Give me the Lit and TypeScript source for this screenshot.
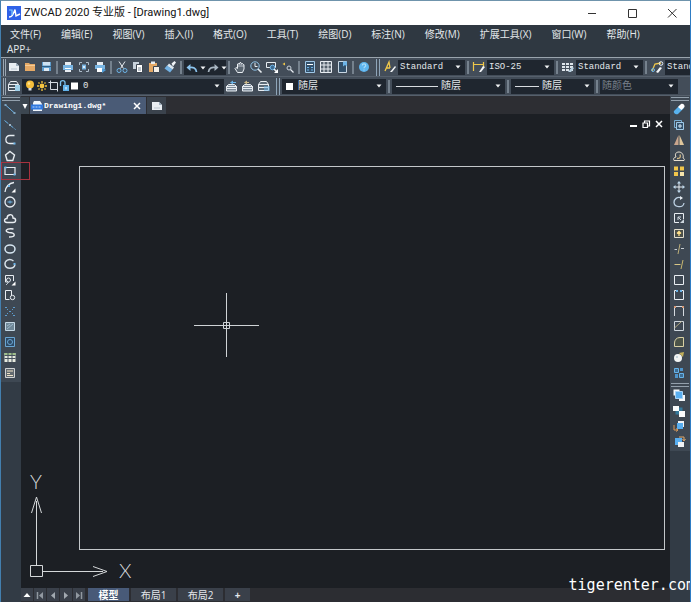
import { LitElement, html, svg, css, nothing, TemplateResult } from "lit";
import { customElement, property } from "lit/decorators.js";

const W = "#e8edf2";
const B = "#6cb4e8";
const Y = "#f0c84a";

const glyphs: Record<string, TemplateResult> = {
  new: svg`<path d="M2 3h7l3 3v5H2z" fill=${W}/><path d="M9 3v3h3" fill="#9fb0c0"/><path d="M4 9h6" stroke="#b9c4cf"/>`,
  open: svg`<path d="M2 3h4l1 1h5v7H2z" fill="#e5a966"/><path d="M2 5.500h10" stroke="#f6cb95"/>`,
  save: svg`<path d="M3 2h9v9H3z" fill="#5d9ccc"/><path d="M4 2h7v3.500H4z" fill="#cfe2f1"/><path d="M5 8h5v3H5z" fill="#dfeaf3"/><path d="M3 6.500h9" stroke="#2f5f87"/>`,
  print: svg`<path d="M4 2h6v3H4zM4 9h6v3H4z" fill=${W}/><path d="M2 5h10v5H2z" fill="#79b5e3"/><path d="M4 8.500h6" stroke="#fff"/>`,
  preview: svg`<path d="M2.500 5V2.500H5M9 2.500h2.500V5M11.500 9v2.500H9M5 11.500H2.500V9" fill="none" stroke="#aebdca"/><path d="M5 4.500h4v5H5z" fill="#79b5e3"/><circle cx="7" cy="7" r="1" fill="#fff"/>`,
  publish: svg`<path d="M4 2h6v3H4z" fill=${W}/><path d="M2 5h10v4H2z" fill="#79b5e3"/><path d="M4 8h6v4H4z" fill="#fff"/><path d="M9 8l4 2-4 3z" fill="#4e9bd6"/>`,
  cut: svg`<path d="M4 1.500l4.500 7M10 1.500L5.500 8.500" stroke=${W} fill="none"/><circle cx="4" cy="10.500" r="2" fill="none" stroke=${B}/><circle cx="10" cy="10.500" r="2" fill="none" stroke=${B}/>`,
  copy: svg`<path d="M2 2h6v7H2z" fill="#c8d2dc"/><path d="M5.500 4.500h6v8h-6z" fill="#fff" stroke="#3c4652"/><path d="M7 8h3M7 10h3" stroke="#7b8a99"/>`,
  paste: svg`<path d="M2 3h8v9H2z" fill="#e5a966"/><path d="M4 1.500h4v2.500H4z" fill=${W}/><path d="M6.500 6.500h6v6h-6z" fill="#f8f1e8" stroke="#3c4652"/>`,
  brush: svg`<path d="M8.500 3.500l3-2.500 1.500 1.500-3 4z" fill="#f0f4f8"/><path d="M6 3.500l5 4-1.500 2L4 6z" fill="#dbe7f1"/><path d="M4 5.500l5.500 4L7 12.500 1.500 8.500z" fill="#73b2e4"/>`,
  undo: svg`<path d="M11.500 11C11 7 8 6 5 6.500" fill="none" stroke="#8cc4ee" stroke-width="1.700"/><path d="M5.500 3v7L1.500 6.500z" fill="#8cc4ee"/>`,
  redo: svg`<path d="M2.500 11C3 7 6 6 9 6.500" fill="none" stroke="#a9b6c2" stroke-width="1.700"/><path d="M8.500 3v7l4-3.500z" fill="#a9b6c2"/>`,
  hand: svg`<path d="M4.500 12.500L2 8.500l1-1 1.500 1V4l1-.5.8.5.7-1.500 1 .2.500 1.200 1-.4.700 1 .800.200V9l-1.500 3.500z" fill="#5a6570" stroke=${W}/><path d="M6 4v3M8 4v3M10 5v2" stroke=${W} stroke-width=".7"/>`,
  zoomrt: svg`<circle cx="6" cy="6" r="4.200" fill="none" stroke="#8fc3e8"/><path d="M6 3v3.500h2.500" stroke=${W} fill="none"/><path d="M9 9l3.500 3.500" stroke=${W} stroke-width="1.600"/>`,
  zoomwin: svg`<path d="M1.500 2.500h9v5h-9z" fill="none" stroke=${W}/><circle cx="7.500" cy="7.500" r="2.300" fill="#3f6c92" stroke=${B}/><path d="M9 9l3 3" stroke=${W} stroke-width="1.500"/><path d="M13 9v4H9z" fill="#fff"/>`,
  zoomprev: svg`<path d="M1.500 4l2.500-1.500V5.500z" fill=${Y}/><circle cx="8" cy="8" r="2" fill="none" stroke="#c9d2da"/><path d="M9.500 9.500l3 3" stroke=${W} stroke-width="1.200"/>`,
  props: svg`<path d="M2.500 1.500h9v11h-9z" fill="#33506a" stroke="#9fc7e6"/><path d="M4 4.500h6" stroke="#fff"/><path d="M4 7.500h2M8 7.500h2M4 10h2M8 10h2" stroke=${B}/>`,
  grid: svg`<path d="M1.500 1.500h11v11h-11zM1.500 5h11M1.500 9h11M5 1.500v11M9 1.500v11" fill="#55616d" stroke=${W}/>`,
  palette: svg`<path d="M3.500 1.500h8v11h-8z" fill="#33506a" stroke="#c9d7e3"/><path d="M8 1.500h4v5l-2-1.500-2 1.500z" fill=${B}/>`,
  help: svg`<circle cx="7" cy="7" r="5" fill="#5db4ee"/><path d="M5.300 5.500c0-2.200 3.400-2.200 3.400 0 0 1.300-1.700 1.300-1.700 2.800M7 9.400v1.200" fill="none" stroke="#a9dbf8" stroke-width="1.200"/>`,
  textstyle: svg`<path d="M2 11L6 2l1 6M3.500 8H7" fill="none" stroke=${Y} stroke-width="1.300"/><path d="M7 12l5-6 1 1-4 5z" fill="#f4f6f8"/>`,
  dimstyle: svg`<path d="M1.500 2v9M11.500 2v5M2 4.500h9" fill="none" stroke=${Y} stroke-width="1.200"/><path d="M7 12l4-6 2 1-4 5z" fill="#f4f6f8"/>`,
  tablestyle: svg`<path d="M1 3h11v8H1z" fill="#dfe6ec"/><path d="M1 5.500h11M1 8.500h11M4.500 3v8M8.500 3v8" stroke="#47525e"/><path d="M7 12l4-5 2 1-3 4z" fill="#b8cfdf"/>`,
  leader: svg`<path d="M2 11l3-7 6-1" fill="none" stroke=${Y} stroke-width="1.300"/><circle cx="11" cy="3.500" r="1.800" fill="none" stroke=${W}/><path d="M6 12l4-5 2 1-4 5z" fill="#f4f6f8"/><circle cx="3" cy="10" r="1.500" fill="none" stroke=${B}/>`,
  layers: svg`<path d="M3.500 2.500h6l2 3h-10zM1.500 5.500h10v3h-10zM1.500 8.500h10v3h-10z" fill="#45525f" stroke=${W}/><path d="M8 6h5v6H8z" fill="#9fd0ea"/>`,
  bulb: svg`<circle cx="7" cy="5.500" r="4" fill="#f6bf3c"/><path d="M5.500 9h3v2.500h-3z" fill="#d8dde2"/><circle cx="6" cy="4.500" r="1.200" fill="#ffe595"/>`,
  sun: svg`<circle cx="7" cy="7" r="2.400" fill="#f6c540"/><path d="M7 2v2M7 10v2M2 7h2M10 7h2M3.500 3.500l1 1M9.500 9.500l1 1M10.500 3.500l-1 1M4.500 9.500l-1 1" stroke="#f6c540" stroke-width="1.300"/>`,
  frame: svg`<path d="M3.500 3.500h7v7h-7z" fill="none" stroke="#d5dbe1"/><path d="M1.500 3.500h3M3.500 1.500v3M10.500 9v3.500" stroke="#d5dbe1"/>`,
  lock: svg`<path d="M2.500 7V3.500c0-2.500 4.500-2.500 4.500 0V6" fill="none" stroke="#7cc1ee" stroke-width="1.300"/><path d="M5 6h6v6H5z" fill="#62b2ea"/><path d="M8 8v2.500" stroke="#fff"/>`,
  swatch: svg`<path d="M2 3.500h7v7H2z" fill="#fff"/>`,
  layer1: svg`<path d="M3.500 5.500h6l2 2h-10zM1.500 7.500h10v2h-10zM1.500 9.500h10v2.500h-10z" fill="#7e8d9b" stroke=${W}/><path d="M5 3.500l3-2v1.500h3v1H8V5.500z" fill=${B}/>`,
  layer2: svg`<path d="M3.500 5.500h6l2 2h-10zM1.500 7.500h10v2h-10zM1.500 9.500h10v2.500h-10z" fill="#7e8d9b" stroke=${W}/><path d="M3 3.500l3-2v1.500h2v1H6V5.500z" fill="#c9b88a"/>`,
  layer3: svg`<path d="M3.500 2.500h6l2 3h-10zM1.500 5.500h10v3h-10zM1.500 8.500h10v3h-10z" fill="#5c6a77" stroke=${W}/><path d="M7.500 7h1v5h-1zM9.500 7h1v5h-1zM11.500 7h1v5h-1z" fill=${B}/>`,
  line: svg`<path d="M2.500 3l9 8" stroke=${B}/><path d="M1.500 2h2v2h-2zM10.500 10h2v2h-2z" fill="#7fa6c4"/>`,
  xline: svg`<path d="M1.500 2.500l11 9" stroke=${B} stroke-dasharray="5 1.500"/><path d="M6 6h2v2H6z" fill="#9fb5c6"/>`,
  pline: svg`<path d="M11.500 2.500H7c-5.500 0-5.500 8 0 8h4.500" fill="none" stroke=${W} stroke-width="1.300"/><path d="M10.500 9.500h2v2h-2z" fill=${B}/>`,
  polygon: svg`<path d="M7 2.500l4.500 3.500-1.700 5.500H4.200L2.500 6z" fill="none" stroke=${W} stroke-width="1.400"/>`,
  rect: svg`<path d="M2 3.500h10v7H2z" fill="none" stroke=${W} stroke-width="1.200"/><path d="M1.500 2.500h2v2h-2zM10.500 9.500h2v2h-2z" fill=${B}/>`,
  arc: svg`<path d="M2 12C2.500 7 6 3 11 2.500" fill="none" stroke=${W} stroke-width="1.300"/><path d="M5 5h2v2H5z" fill=${B}/><path d="M12.500 8.500v4h-4z" fill="#fff"/>`,
  circle: svg`<circle cx="7" cy="7" r="5" fill="none" stroke=${W} stroke-width="1.300"/><path d="M4.500 7h5M7 5.500v3" stroke=${B}/>`,
  cloud: svg`<path d="M4 11.500c-3.500 0-3-4 0-4C4 3 10 2 10 7c3.500 0 3.500 4.500 0 4.500z" fill="none" stroke=${W} stroke-width="1.400"/>`,
  spline: svg`<path d="M10.500 3C2 2 1.500 6 6 6.500c7 .5 7 4.500 0 4.500" fill="none" stroke=${W} stroke-width="1.400"/>`,
  ellipse: svg`<ellipse cx="7" cy="7" rx="5" ry="4" fill="none" stroke="#d6e6f2" stroke-width="1.500"/>`,
  ellarc: svg`<path d="M10.500 4C6 .5 1.500 4 2 7.500c1 5 9 5 10 0" fill="none" stroke="#d6e0e8" stroke-width="1.400"/><path d="M10.500 6h2v2h-2z" fill=${B}/>`,
  insert: svg`<path d="M2.500 9V2.500h8V8M2.500 9H5" fill="none" stroke=${W}/><circle cx="5.500" cy="7" r="2" fill="none" stroke=${W}/><path d="M3 12l5-5" stroke="#b7c3ce"/><path d="M12.500 8.500v4h-4z" fill="#fff"/>`,
  block: svg`<path d="M8.500 8V2.500h-6v9h4" fill="none" stroke=${W}/><circle cx="9.500" cy="9.500" r="2.200" fill="none" stroke=${W}/>`,
  point: svg`<path d="M2 3h2v1H2zM10 3h2v1h-2zM6 7h2v1H6zM2 11h2v1H2zM10 11h2v1h-2zM4 5h1v1H4zM9 5h1v1H9zM4 9h1v1H4zM9 9h1v1H9z" fill="#5d9ccc"/>`,
  hatch: svg`<path d="M2.500 3.500h9v8h-9z" fill="#6f8797" stroke="#c5d8e5"/><path d="M4 10l6-5M4 7l3-2" stroke="#9db8ca"/>`,
  region: svg`<path d="M2.500 2.500h9v9h-9z" fill="#2d4a66" stroke="#6aa6d3"/><circle cx="7" cy="7" r="2.500" fill="none" stroke="#6aa6d3"/>`,
  table: svg`<path d="M1.500 3h11v9h-11z" fill="#e6eadf"/><path d="M1.500 3h11v2.500h-11z" fill="#9fc08a"/><path d="M1.500 5.500h11M1.500 8.500h11M5 3v9M9 3v9" stroke="#47525e"/>`,
  mtext: svg`<path d="M2.500 2.500h9v9h-9z" fill="#626a70" stroke="#d0d3d4"/><path d="M4 5h6M4 7.500h3M4 9.500h6" stroke="#eee3c8"/>`,
  erase: svg`<path d="M2 9l6-6 4 3-6 6c-2 1-5-1-4-3z" fill="#58b2ee"/><path d="M6 5l3-3c2-1 4 1 3.500 3L9.500 8z" fill="#fff"/>`,
  dup: svg`<path d="M2.500 2.500h7v2M2.500 2.500v7h2" fill="none" stroke="#79aed4"/><path d="M4.500 4.500h7v7h-7z" fill="#34536e" stroke="#9fcbea"/><path d="M6 8h4M8 6v4" stroke="#d7e9f6"/>`,
  mirror: svg`<path d="M6.500 2v10H2z" fill="#c9a58d"/><path d="M7.500 2v10H12z" fill="#e0c79c"/>`,
  offset: svg`<path d="M2 11.500h10c1-1 0-2-1-2.500 1-3-1-6-4-6S2.500 5 4 8c-2 0-3 2-2 3.500z" fill="none" stroke="#e6dfcf"/><path d="M5 9.500c3 0 4-1 3-4" fill="none" stroke="#d8bd84" stroke-width="1.300"/>`,
  array: svg`<path d="M2 2.500h4v4H2zM8 2.500h4v4H8zM2 8h4v4H2z" fill="#f1c64b"/><path d="M8 8h4v4H8z" fill="#f7e5ac"/>`,
  move: svg`<path d="M7 2v10M2 7h10" stroke=${W}/><path d="M7 1l2 2.500H5zM7 13l2-2.500H5zM1 7l2.500-2v4zM13 7l-2.500-2v4z" fill="#bcd6ea"/>`,
  rotate: svg`<path d="M9.500 3C5 1 2 4.500 2 7.500c.500 5 9 6 10 .500" fill="none" stroke="#bcd0e2" stroke-width="1.300"/><path d="M8 1l3 2-3 2z" fill=${W}/>`,
  scale: svg`<path d="M7 11.500H2.500v-9h9V8" fill="none" stroke=${W}/><path d="M6 6l3 3M6 9V6h3" stroke="#cdd6de" fill="none"/><path d="M12 8v4H8z" fill="#cdd6de"/>`,
  stretch: svg`<path d="M2.500 3.500h9v8h-9z" fill="#4b4f49" stroke="#e3dfcf"/><path d="M7 10V6M5 7.500l2-2 2 2" stroke="#ffe08a" stroke-width="1.300" fill="none"/>`,
  trim: svg`<path d="M6 12L8 2" stroke="#bcae79"/><path d="M2.500 7.500H5M9 6.500h3" stroke="#c7cdd2"/>`,
  extend: svg`<path d="M9 12l2-9" stroke="#c9b870"/><path d="M2.500 7.500h6" stroke="#d7c686"/>`,
  breakpt: svg`<path d="M2.500 2.500h9v9h-9z" fill="none" stroke=${W}/>`,
  breaks: svg`<path d="M5 2.500H2.500v9h9v-9H9" fill="none" stroke=${W}/><path d="M4 2h2v2H4zM8 2h2v2H8z" fill=${B}/>`,
  join: svg`<path d="M2.500 12V4M11.500 12V4M4 2.500h6" fill="none" stroke="#d3dae0"/><path d="M2 2h2v2H2zM10 2h2v2h-2z" fill="#d79b78"/>`,
  chamfer: svg`<path d="M2.500 2.500h9v9h-9z" fill="none" stroke="#cfd7de"/><path d="M2.500 9l7-6.500" stroke="#b3aa83"/>`,
  fillet: svg`<path d="M2.500 11.500V8c0-3 2-5.500 5.500-5.500h3.500v9z" fill="#4b5348" stroke="#d8d0a4"/>`,
  explode: svg`<circle cx="6" cy="8" r="4" fill="#f3f5f5"/><path d="M7 3l5-1-1 5z" fill="#c3b15b"/><circle cx="5" cy="7" r="1" fill="#b9cdd8"/>`,
  group: svg`<path d="M2.500 2.500h4v4h-4zM7.500 7.500h4v4h-4z" fill="#3d6d94" stroke="#67b4ea"/><path d="M8 2h3v3H8zM3 8h3v4H3z" fill="#4f95cb"/>`,
  front: svg`<path d="M1.500 1.500h6v6h-6zM7 7h6v6H7z" fill="#f4f7fa"/><path d="M3.500 3.500h7v7h-7z" fill="#58aef0" stroke="#a6d3f6"/>`,
  back: svg`<path d="M3.500 3.500h7v7h-7z" fill="#35799c"/><path d="M1 2h6v5H1zM7 7h6v6H7z" fill="#fafcfd"/>`,
  above: svg`<path d="M6 2h6v6H6z" fill="#f0f3f5"/><path d="M5 4h6v6H5z" fill="#58aef0"/><path d="M2 6v5h4M4 9.500L6 11l-2 1.500" fill="none" stroke="#d9995a"/>`,
  under: svg`<path d="M3 3h7v7H3z" fill="#58aef0"/><path d="M6 7h6v5H6z" fill="#f0f3f5"/><path d="M7 2h5v3M10.500 4L12 6l1.500-2" fill="none" stroke="#e0a768"/>`,
  logo: svg`<path d="M0 0h14v14H0z" fill="#2f62e8"/><path d="M2 11c3 0 4-2 6-7.500l1 6.500 4-2" fill="none" stroke="#fff" stroke-width="1.400"/><path d="M2 4h3v5" fill="none" stroke="#7fd0ff" stroke-width="1.200"/>`,
  dwg: svg`<path d="M4 2h6l2 3v7H3V4z" fill="#f1f6fb"/><path d="M1 5.500h12v5H1z" fill="#2f78e0"/><path d="M2.500 8h9" stroke="#bcd8fa" stroke-dasharray="2 1"/>`,
  down: svg`<path d="M4.500 5.500h5L7 8.500z" fill="#f2f4f6"/>`,
  downbig: svg`<path d="M4.500 5h5L7 10z" fill="#fff"/>`,
  close: svg`<path d="M4 4l6 6M10 4l-6 6" stroke="#fff" stroke-width="1.500"/>`,
  min: svg`<path d="M4 9h7" stroke="#fff" stroke-width="2"/>`,
  restore: svg`<path d="M5.500 6V4h5v5H8.500" fill="none" stroke="#fff" stroke-width="1.200"/><path d="M4 6h4.500v4.500H4z" fill="none" stroke="#fff" stroke-width="1.200"/>`,
  winmin: svg`<path d="M3 7.500h8" stroke="#333"/>`,
  winmax: svg`<path d="M3.500 3.500h8v8h-8z" fill="none" stroke="#333"/>`,
  winclose: svg`<path d="M3 3l8.500 8.500M11.500 3L3 11.500" stroke="#333"/>`,
  up: svg`<path d="M3.500 9h7L7 5z" fill="#fff"/>`,
  first: svg`<path d="M4.500 4v7" stroke="#9299a1" stroke-width="1.500"/><path d="M10 4v7L6 7.500z" fill="#9299a1"/>`,
  prev: svg`<path d="M9 4v7L5 7.500z" fill="#a2a9b0"/>`,
  next: svg`<path d="M5 4v7l4-3.500z" fill="#a2a9b0"/>`,
  last: svg`<path d="M9.500 4v7" stroke="#9299a1" stroke-width="1.500"/><path d="M4 4v7l4-3.500z" fill="#9299a1"/>`,
};

const icon = (name: string) =>
  html`<svg class="icon" width="14" height="14" viewBox="0 0 14 14" aria-hidden="true">${glyphs[name]}</svg>`;

const shared = css`
  * { box-sizing: border-box; }
  button {
    display: flex; align-items: center; justify-content: center;
    margin: 0; padding: 0; border: 0; background: none; color: inherit; font: inherit;
  }
  .icon { display: block; flex: none; }
`;

@customElement("tool-strip")
export class ToolStrip extends LitElement {
  @property({ attribute: false }) tools: string[] = [];
  @property() marked = "";
  static styles = [shared, css`
    :host { display: block; padding: 1px 1px 2px; background: #3e4853; }
    .grip { height: 4px; border-top: 1px solid #93a0ac; border-bottom: 1px solid #93a0ac; }
    .tools { display: flex; flex-direction: column; }
    button { height: 16px; width: 16px; }
    button:nth-child(2n) { height: 15px; }
    .marked { position: relative; }
    .marked::after {
      content: ""; position: absolute; z-index: 1; inset: -1px -12px -1px -1px; border: 1px solid #a8323f;
    }
  `];
  render() {
    return html`<div class="grip"></div>
      <div class="tools">${this.tools.map(
        (t) => html`<button class=${t === this.marked ? "marked" : ""} aria-label=${t}>${icon(t)}</button>`
      )}</div>`;
  }
}

@customElement("combo-box")
export class ComboBox extends LitElement {
  @property() value = "";
  @property() label = "";
  @property() sample = "";
  @property({ type: Boolean }) disabled = false;
  static styles = [shared, css`
    :host { display: flex; align-items: center; height: 15px; background: #1f262f; min-width: 0; color: #e3e7ea; }
    select {
      appearance: none; flex: 1; min-width: 0; height: 15px; margin: 0; padding: 0 0 0 2px; border: 0; background: none;
      color: inherit; font: 9px/15px "Liberation Mono", "Noto Sans CJK SC", monospace; opacity: 1;
    }
    select.cjk { font-size: 10px; }
    select:disabled { color: #78808a; }
    .box { width: 7px; height: 7px; margin: 0 3px 0 4px; background: #fff; }
    .rule { width: 24px; height: 1px; margin: 0 1px 0 4px; background: #d9dde1; }
    .long { width: 42px; }
  `];
  render() {
    const s = this.sample;
    return html`${s ? html`<span class=${s === "box" ? "box" : s === "long" ? "rule long" : "rule"}></span>` : nothing}
      <select class=${this.value.startsWith("随") ? "cjk" : ""} aria-label=${this.label} ?disabled=${this.disabled}><option>${this.value}</option></select>
      ${icon("down")}`;
  }
}

@customElement("app-root")
export class AppRoot extends LitElement {
  static styles = [shared, css`
    :host {
      display: flex; flex-direction: column; min-height: 100vh; overflow: hidden; position: relative;
      border-left: 1px solid #437fae; border-right: 1px solid #2e7cc4; border-top: 1px solid #6f94ac;
      background: #323b45; color: #e4e8eb; font: 10px/14px "Open Sans", "Noto Sans CJK SC", sans-serif;
    }
    header { display: flex; align-items: center; height: 24px; padding-left: 6px; gap: 3px; background: #fff; color: #111; }
    h1 { flex: 1; margin: 0; font: 11px/18px Roboto, "Noto Sans CJK SC", sans-serif; white-space: nowrap; }
    .win { width: 37px; height: 24px; }
    nav { display: flex; flex-wrap: wrap; padding-top: 2px; background: #2f3841; border-bottom: 1px solid #9aa4ad; }
    nav a { padding: 0 10px 0 9px; margin-right: 1px; height: 15px; line-height: 15px; color: inherit; text-decoration: none; white-space: nowrap; }
    nav a:last-child { padding-left: 6px; }
    .bar { display: flex; align-items: center; height: 19px; padding-left: 2px; background: #434d59; overflow: hidden; border-bottom: 1px solid #56606c; }
    .bar > * { flex: none; }
    .bar button { width: 16px; height: 16px; }
    .grip { width: 3px; height: 17px; border-left: 1px solid #9aa6b2; border-right: 1px solid #9aa6b2; }
    .sep { width: 2px; height: 13px; margin: 0 2px; background: #75818d; }
    .double { width: 4px; height: 17px; margin: 0 2px 0 4px; border-left: 1px solid #8fa5b9; border-right: 1px solid #8fa5b9; }
    .history { display: flex; height: 15px; background: #1f262f; }
    .history .arrow { width: 5px; }
    .style { width: 67px; }
    .layer { display: flex; align-items: center; height: 15px; width: 202px; padding-left: 2px; background: #1f262f; }
    .layer button { width: 12px; }
    .layer button:nth-of-type(n + 3) { width: 11px; }
    .layer combo-box { flex: 1; }
    .color { width: 104px; }
    .ltype { width: 113px; }
    .lweight { width: 83px; }
    .plot { width: 78px; }
    .main { flex: 1; display: flex; }
    .rail { width: 20px; flex: none; }
    .centre { flex: 1; display: flex; flex-direction: column; min-width: 0; }
    .tabs { display: flex; gap: 1px; height: 18px; padding-top: 1px; background: #2d2e33; }
    .tabs .list { width: 8px; background: #3c4650; }
    .file { display: flex; align-items: center; width: 116px; padding: 0 2px 0 0; background: #4a5b76; color: #fff; font: bold 8px/16px "Liberation Mono", monospace; }
    .file span { flex: 1; }
    .tabs .add { width: 19px; background: #3b434d; }
    .canvas { flex: 1; position: relative; background: #1c1f24; }
    .mdi { position: absolute; top: 3px; right: 5px; display: flex; }
    .mdi button { width: 13px; height: 14px; }
    .shape { position: absolute; inset: 52px 5px 38px 58px; border: 1px solid #c3c7ca; }
    .cursor { position: absolute; left: 173px; top: 179px; }
    .ucs { position: absolute; left: 8px; bottom: 1px; }
    .axis { fill: #d5d8da; font: 300 20px "Lato", sans-serif; }
    footer { display: flex; gap: 1px; height: 15px; padding-bottom: 2px; background: #2c2d32; }
    footer button { background: #3a404a; }
    .nav { width: 12px; }
    footer .sheet { width: 45px; margin-left: 1px; }
    footer .on { width: 41px; margin-left: 2px; background: #485a78; font-weight: bold; color: #fff; }
    footer .plus { width: 25px; margin-left: 1px; font-weight: bold; }
    .mark { position: absolute; right: -5px; bottom: 9px; color: #fff; font: 15px/18px "DejaVu Sans Mono", monospace; }
  `];

  private menus = ["文件(F)", "编辑(E)", "视图(V)", "插入(I)", "格式(O)", "工具(T)", "绘图(D)", "标注(N)", "修改(M)", "扩展工具(X)", "窗口(W)", "帮助(H)", "APP+"];
  private draw = ["line", "xline", "pline", "polygon", "rect", "arc", "circle", "cloud", "spline", "ellipse", "ellarc", "insert", "block", "point", "hatch", "region", "table", "mtext"];
  private modify = ["erase", "dup", "mirror", "offset", "array", "move", "rotate", "scale", "stretch", "trim", "extend", "breakpt", "breaks", "join", "chamfer", "fillet", "explode", "group"];
  private order = ["front", "back", "above", "under"];

  private tools(...names: string[]) {
    return names.map((n) => html`<button aria-label=${n}>${icon(n)}</button>`);
  }

  render() {
    const sep = html`<span class="sep"></span>`;
    return html`
      <header>
        ${icon("logo")}
        <h1>ZWCAD 2020 专业版 - [Drawing1.dwg]</h1>
        ${["winmin", "winmax", "winclose"].map((n) => html`<button class="win" aria-label=${n}>${icon(n)}</button>`)}
      </header>
      <nav>${this.menus.map((m) => html`<a href="#">${m}</a>`)}</nav>
      <div class="bar">
        <span class="grip"></span>
        ${this.tools("new", "open", "save")}${sep}
        ${this.tools("print", "preview", "publish")}${sep}
        ${this.tools("cut", "copy", "paste", "brush")}${sep}
        <div class="history">
          ${this.tools("undo")}<button class="arrow" aria-label="undo list">${icon("down")}</button>
          ${this.tools("redo")}<button class="arrow" aria-label="redo list">${icon("down")}</button>
        </div>${sep}
        ${this.tools("hand", "zoomrt", "zoomwin", "zoomprev")}${sep}
        ${this.tools("props", "grid", "palette")}${sep}
        ${this.tools("help")}
        <span class="double"></span>
        ${this.tools("textstyle")}<combo-box class="style" label="text style" value="Standard"></combo-box>${sep}
        ${this.tools("dimstyle")}<combo-box class="style" label="dimension style" value="ISO-25"></combo-box>${sep}
        ${this.tools("tablestyle")}<combo-box class="style" label="table style" value="Standard"></combo-box>${sep}
        ${this.tools("leader")}<combo-box class="style" label="leader style" value="Standard"></combo-box>
      </div>
      <div class="bar">
        <span class="grip"></span>
        ${this.tools("layers")}
        <div class="layer">
          ${this.tools("bulb", "sun", "frame", "lock", "swatch")}
          <combo-box label="layer" value="0"></combo-box>
        </div>
        ${this.tools("layer1", "layer2", "layer3")}
        <span class="double"></span>
        <combo-box class="color" label="color" sample="box" value="随层"></combo-box>${sep}
        <combo-box class="ltype" label="linetype" sample="long" value="随层"></combo-box>${sep}
        <combo-box class="lweight" label="lineweight" sample="short" value="随层"></combo-box>${sep}
        <combo-box class="plot" label="plot style" value="随颜色" disabled></combo-box>
      </div>
      <div class="main">
        <aside class="rail"><tool-strip .tools=${this.draw} marked="rect"></tool-strip></aside>
        <div class="centre">
          <div class="tabs">
            <button class="list" aria-label="drawings">${icon("downbig")}</button>
            <div class="file">${icon("dwg")}<span>Drawing1.dwg*</span><button aria-label="close drawing">${icon("close")}</button></div>
            <button class="add" aria-label="new drawing">${icon("new")}</button>
          </div>
          <div class="canvas">
            <div class="mdi">${this.tools("min", "restore", "close")}</div>
            <div class="shape"></div>
            <svg class="cursor" width="65" height="65" viewBox="0 0 65 65" fill="none" stroke="#cfd3d6" aria-hidden="true">
              <path d="M32.500 0v64M0 32.500h65M29.500 29.500h6v6h-6z"/>
            </svg>
            <svg class="ucs" width="110" height="120" viewBox="0 -10 110 120" fill="none" stroke="#d5d8da">
              <path d="M1.500 88.500h12v11h-12zM7.500 88V24M2.500 36l5-16 5 16M14 94.500h60M64 89.500l14 5-14 5"/>
              <text class="axis" stroke="none" x="1" y="12">Y</text>
              <text class="axis" stroke="none" x="90" y="101">X</text>
            </svg>
          </div>
          <footer>
            ${["up", "first", "prev", "next", "last"].map((n) => html`<button class="nav" aria-label=${n}>${icon(n)}</button>`)}
            <button class="on">模型</button>
            <button class="sheet">布局1</button>
            <button class="sheet">布局2</button>
            <button class="plus">+</button>
          </footer>
        </div>
        <aside class="rail">
          <tool-strip .tools=${this.modify}></tool-strip>
          <tool-strip .tools=${this.order}></tool-strip>
        </aside>
      </div>
      <div class="mark">tigerenter.com</div>
    `;
  }
}
